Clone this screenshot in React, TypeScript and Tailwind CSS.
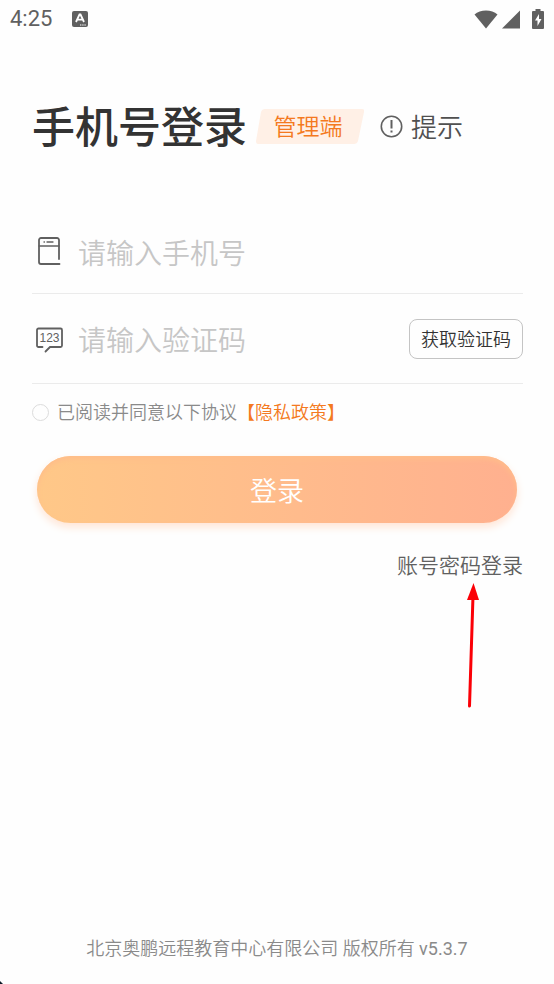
import { useState } from "react";

function StatusBar() {
  return (
    <header className="flex h-[38px] items-center justify-between px-[10px] text-[#606060]">
      <div className="flex items-center gap-5">
        <time className="text-[22px] leading-6 font-normal">4:25</time>
        <svg width="16" height="16" viewBox="0 0 16 16" aria-hidden="true">
          <rect width="16" height="16" rx="2" fill="#606060" />
          <path d="M4 11 7.5 3.5h1L12 11M5.5 8.7h5" fill="none" stroke="#fff" strokeWidth="1.8" />
          <path d="M8 14h1.4M10.2 14h1.4M12.4 14h1.4" stroke="#fff" strokeWidth="1.2" />
        </svg>
      </div>
      <div className="flex items-center gap-1">
        <svg width="24" height="19" viewBox="0 0 24 19" aria-hidden="true">
          <path d="M12 18.5.5 4.600C3.500 2 7.500.5 12 .5s8.500 1.500 11.500 4.100z" fill="#606060" />
        </svg>
        <svg width="18" height="19" viewBox="0 0 18 19" aria-hidden="true">
          <path d="M18 .5v18H0z" fill="#606060" />
        </svg>
        <svg className="ml-2" width="12" height="20" viewBox="0 0 12 20" aria-hidden="true">
          <path d="M3.500 0h5v2H11a1 1 0 0 1 1 1v16a1 1 0 0 1-1 1H1a1 1 0 0 1-1-1V3a1 1 0 0 1 1-1h2.500z" fill="#606060" />
          <path d="M7 5 3 11.500h2.500V17L9.500 10H7z" fill="#fff" />
        </svg>
      </div>
    </header>
  );
}

function PhoneIcon() {
  return (
    <svg width="34" height="30" viewBox="0 0 34 30" fill="none" stroke="#606060" strokeWidth="1.800" strokeLinecap="round" aria-hidden="true">
      <path d="M27 22V3a2 2 0 0 0-2-2H9a2 2 0 0 0-2 2v22a2 2 0 0 0 2 2h18.500" />
      <path d="M7 9h20" strokeWidth="1.300" />
      <path d="M12 5h.5M15 5h6" strokeWidth="1.300" />
    </svg>
  );
}

function CodeIcon() {
  return (
    <svg width="34" height="30" viewBox="0 0 34 30" fill="none" aria-hidden="true">
      <path d="M10.500 23H6.500a1.500 1.500 0 0 1-1.500-1.500V6A1.500 1.500 0 0 1 6.500 4.500h22A1.500 1.500 0 0 1 30 6V21.500a1.500 1.500 0 0 1-1.500 1.500H18L13.500 27.500" stroke="#606060" strokeWidth="1.800" strokeLinecap="round" />
      <text x="17.500" y="18" textAnchor="middle" fontSize="12" fontFamily="Liberation Sans, Arial, sans-serif" fill="#606060">123</text>
    </svg>
  );
}

const inputClass =
  "h-11 min-w-0 flex-1 bg-transparent pt-[6px] text-[28px] font-[350] text-[#333] outline-none placeholder:text-[#c6c6c6]";

export default function App() {
  const [agreed, setAgreed] = useState(false);
  return (
    <div className="flex min-h-screen flex-col bg-[#fefefe] font-[Roboto,'Noto_Sans_CJK_SC',sans-serif]">
      <StatusBar />
      <form className="flex flex-col pt-14 pr-[31px] pl-8" onSubmit={(e) => e.preventDefault()}>
        <div className="flex h-16 items-center whitespace-nowrap">
          <h1 className="pt-1 text-[43px] leading-[64px] font-medium text-[#333]">手机号登录</h1>
          <div className="relative ml-[9px] flex h-9 w-[108px] items-center justify-center">
            <svg className="absolute inset-0" width="108" height="36" viewBox="0 0 108 36" aria-hidden="true">
              <path d="M9 1h97q3 0 2 3l-6 29q-1 3-4 3H2q-2 0-2-3L5 4q1-3 4-3z" fill="#fff0e6" />
            </svg>
            <span className="relative pt-1 pr-1 text-[23px] leading-8 font-[350] text-[#f47920]">管理端</span>
          </div>
          <button type="button" className="ml-4 flex items-center gap-2 text-[26px] leading-9 font-[350] text-[#505050]">
            <svg width="23" height="23" viewBox="0 0 23 23" fill="none" stroke="#606060" strokeWidth="1.600" aria-hidden="true">
              <circle cx="11.500" cy="11.500" r="10.200" />
              <path d="M11.500 5v8.500M11.500 15.500v2" strokeWidth="2" />
            </svg>
            <span className="pt-1">提示</span>
          </button>
        </div>

        <div className="mt-[52px] flex h-[84px] items-center gap-3 border-b border-[#ebebeb]">
          <label htmlFor="phone" aria-label="手机号">
            <PhoneIcon />
          </label>
          <input id="phone" type="tel" placeholder="请输入手机号" className={inputClass} />
        </div>
        <div className="flex h-[90px] items-center gap-3 border-b border-[#ebebeb]">
          <label htmlFor="code" aria-label="验证码">
            <CodeIcon />
          </label>
          <input id="code" type="text" placeholder="请输入验证码" className={inputClass} />
          <button type="button" className="h-10 shrink-0 rounded-lg border border-[#c4c4c4] px-[11px] pt-[2px] text-[18px] leading-6 font-[350] text-[#333]">
            获取验证码
          </button>
        </div>

        <div className="mt-[14px] flex h-7 items-center whitespace-nowrap text-[18px] leading-6 font-[350]">
          <input
            id="agree"
            type="checkbox"
            checked={agreed}
            onChange={(e) => setAgreed(e.target.checked)}
            className="mr-2 size-[17px] shrink-0 appearance-none rounded-full border border-[#dcdcdc] checked:bg-[#ff8a3c]"
          />
          <label htmlFor="agree" className="pt-[2px] text-[#8a8a8a]">
            已阅读并同意以下协议
          </label>
          <a href="#privacy" className="pt-[2px] text-[#f47920]">
            【隐私政策】
          </a>
        </div>

        <button
          type="submit"
          className="mr-[6px] ml-[5px] mt-[30px] h-[67px] rounded-full bg-linear-to-r from-[#ffc888] to-[#ffb08f] pt-[6px] text-[27px] font-[350] text-white shadow-[0_4px_8px_#ffe4d4,inset_0_3px_5px_#ffbd8a]"
        >
          登录
        </button>

        <div className="relative mt-[27px] self-end">
          <a href="#password" className="block text-[21px] leading-8 font-[350] text-[#606060]">
            账号密码登录
          </a>
          <svg className="absolute top-full right-[42px]" width="16" height="128" viewBox="0 0 16 128" aria-hidden="true">
            <path d="M8 14 4.500 124" stroke="#fb0007" strokeWidth="3" strokeLinecap="round" />
            <path d="M8.500 1 2 18h12z" fill="#fb0007" />
          </svg>
        </div>
      </form>

      <footer className="mt-auto flex flex-col pt-40">
        <p className="text-center text-[18px] leading-6 font-[350] text-[#8a8a8a]">
          北京奥鹏远程教育中心有限公司 版权所有 <span className="font-normal">v5.3.7</span>
        </p>
        <svg className="mt-5" width="3" height="3" viewBox="0 0 3 3" aria-hidden="true">
          <path d="M0 0 3 3H0z" fill="#0b1a26" />
        </svg>
      </footer>
    </div>
  );
}
